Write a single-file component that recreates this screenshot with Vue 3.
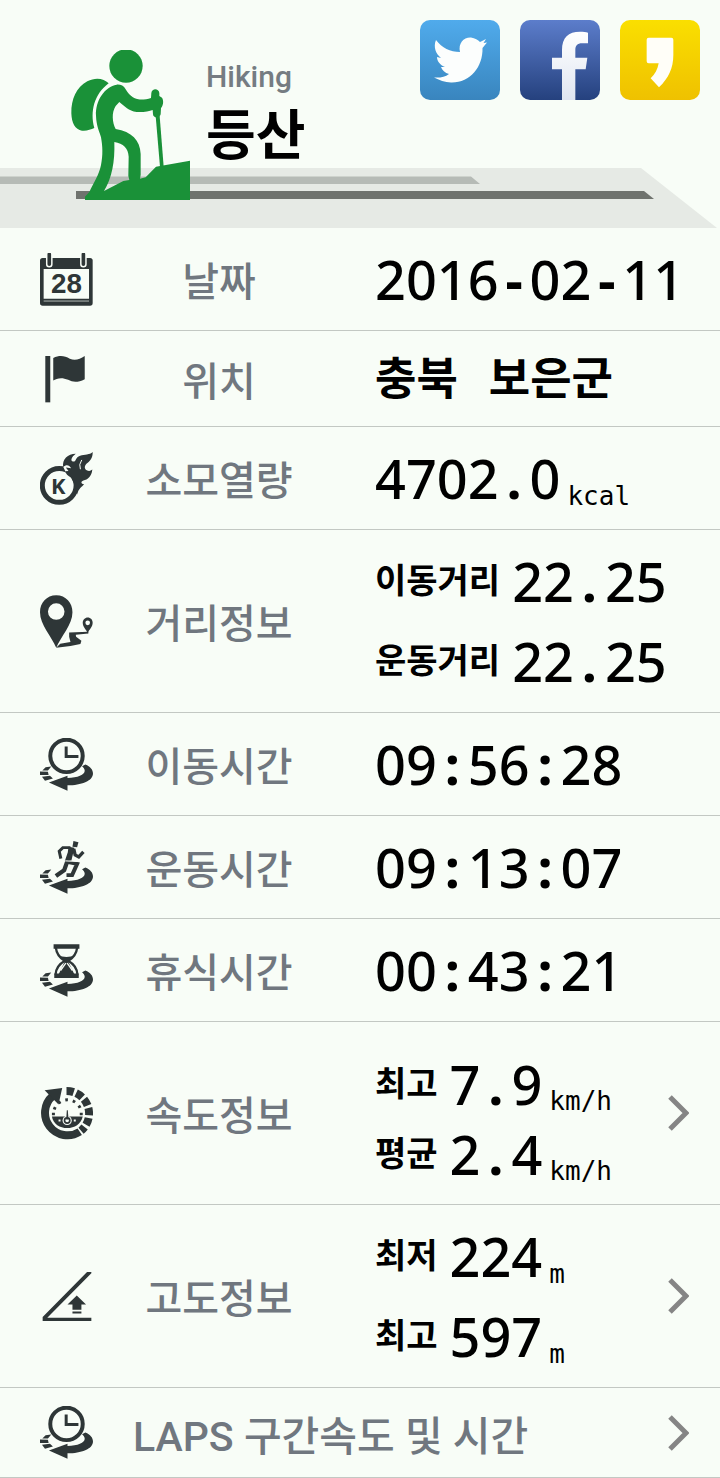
<script setup>
const rows = [
  { icon: 'calendar', label: '날짜', lines: [{ value: '2016-02-11' }] },
  { icon: 'flag', label: '위치', size: 'short', lines: [{ value: '충북 보은군', korean: true }] },
  { icon: 'burn', label: '소모열량', lines: [{ value: '4702.0', unit: 'kcal' }] },
  {
    icon: 'route',
    label: '거리정보',
    size: 'tall',
    lines: [
      { name: '이동거리', value: '22.25' },
      { name: '운동거리', value: '22.25' }
    ]
  },
  { icon: 'clock', label: '이동시간', lines: [{ value: '09:56:28' }] },
  { icon: 'runner', label: '운동시간', lines: [{ value: '09:13:07' }] },
  { icon: 'hourglass', label: '휴식시간', lines: [{ value: '00:43:21' }] },
  {
    icon: 'speed',
    label: '속도정보',
    size: 'tall',
    dense: true,
    href: '#speed',
    lines: [
      { name: '최고', value: '7.9', unit: 'km/h' },
      { name: '평균', value: '2.4', unit: 'km/h' }
    ]
  },
  {
    icon: 'altitude',
    label: '고도정보',
    size: 'tall',
    href: '#altitude',
    lines: [
      { name: '최저', value: '224', unit: 'm' },
      { name: '최고', value: '597', unit: 'm' }
    ]
  },
  { icon: 'clock', label: 'LAPS 구간속도 및 시간', size: 'laps', href: '#laps', lines: [] }
]

// Separators get a cell as wide as a digit
const splitValue = (value) => value.split(/([-.: ])/).filter((part) => part !== '')
const isSeparator = (part) => /^[-.: ]$/.test(part)
</script>

<template>
  <main class="page">
    <header class="header">
      <svg class="header__band" viewBox="0 0 720 60" preserveAspectRatio="none" aria-hidden="true">
        <path d="M0 0H641L717 60H0Z" fill="#e6eae5" />
        <path d="M0 8.500H471L480 16H0Z" fill="#b6bbb6" />
        <path d="M76 23H644L654 31H76Z" fill="#6f736e" />
      </svg>

      <svg class="header__hiker" viewBox="210 150 360 450" aria-hidden="true">
        <g fill="#1a9138">
          <circle cx="378" cy="198" r="50" />
          <path d="M326 250C312 235 286 231 262 244C229 262 213 298 214 340C215 370 225 389 246 392C260 394 272 388 283 384C270 335 282 283 326 250Z" />
          <path d="M350 254C315 260 286 300 288 347C289 380 300 398 303 412C308 440 309 465 303 495C297 525 280 550 268 576L255 590V600H570V482L468 500L437 532L420 536L422 524V462C420 420 395 395 347 387C337 368 334 338 347 318L358 306C375 320 385 332 410 336C430 337 448 334 458 330L459 343C460 356 480 355 482 343L483 324C491 315 491 300 486 293L478 288V279C476 264 456 264 454 279L453 294C440 298 425 300 415 298C397 295 387 284 377 268C371 257 361 253 350 254ZM343 426C370 430 385 445 386 470L385 528L388 540L370 543L312 573C336 535 345 485 343 426Z" fill-rule="evenodd" />
          <path d="M467 348L479 348L491 500H480Z" />
        </g>
      </svg>

      <div class="header__titles">
        <p class="header__subtitle">Hiking</p>
        <h1 class="header__title">등산</h1>
      </div>

      <div class="header__share">
        <button class="share" type="button" aria-label="Twitter">
          <svg viewBox="0 0 80 80">
            <defs>
              <linearGradient id="twitter" x2="0" y2="1">
                <stop offset="0" stop-color="#50abec" />
                <stop offset="1" stop-color="#3985be" />
              </linearGradient>
            </defs>
            <rect width="80" height="80" rx="10" fill="url(#twitter)" />
            <path
              fill="#fcfefd"
              d="M16 20C22 28 30 32 40 32C38 23 44 17 51 17.500C55 18 58 20 60 22L66 19L63.500 23L67 22.500L62.500 28C63 47 50 63 31 62.500C25 62.500 19 60 14 57.500C20 58 25 57 29 54C25 53 22 50 21 47H25C20 45 17 41 17 37L21 38C16 34 13 27 16 20Z"
            />
          </svg>
        </button>
        <button class="share" type="button" aria-label="Facebook">
          <svg viewBox="360 60 240 240">
            <defs>
              <linearGradient id="facebook" x2="0" y2="1">
                <stop offset="0" stop-color="#5c7dcb" />
                <stop offset="1" stop-color="#25417e" />
              </linearGradient>
              <linearGradient id="stem" x2="0" y2="1">
                <stop offset="0" stop-color="#ffffff" />
                <stop offset="1" stop-color="#dfe5f1" />
              </linearGradient>
            </defs>
            <rect x="360" y="60" width="240" height="240" rx="30" fill="url(#facebook)" />
            <path d="M486 300V208H456V173H486V150C486 112 505 95 540 95C550 95 558 96 564 98V130H546C532 130 526 137 526 150V173H562L557 208H526V300Z" fill="url(#stem)" />
          </svg>
        </button>
        <button class="share" type="button" aria-label="KakaoStory">
          <svg viewBox="660 60 240 240">
            <defs>
              <linearGradient id="kakao" x2="0" y2="1">
                <stop offset="0" stop-color="#fadf00" />
                <stop offset="1" stop-color="#efc100" />
              </linearGradient>
            </defs>
            <rect x="660" y="60" width="240" height="240" rx="30" fill="url(#kakao)" />
            <path d="M746 113H814Q820 113 820 119V165C820 205 805 235 777 262L752 235C765 222 773 208 776 190H746Q740 190 740 184V119Q740 113 746 113Z" fill="#fffef8" />
          </svg>
        </button>
      </div>
    </header>

    <ul class="list">
      <li v-for="row in rows" :key="row.label">
        <component
          :is="row.href ? 'a' : 'div'"
          :href="row.href"
          :class="['row', row.size && `row--${row.size}`, { 'row--dense': row.dense }]"
        >
          <svg class="row__icon" viewBox="0 0 160 160" aria-hidden="true">
            <!-- Return arrow shared by the time icons -->
            <g v-if="['clock', 'runner', 'hourglass'].includes(row.icon)">
              <path d="M27 134L83 114V121C114 120 135 111 135 99C135 93 131 89 127 85L137 80C152 86 160 96 160 108C159 130 125 143 83 143V159Z" />
              <path d="M7 98L17 88L34 86L24 98ZM0 101L24 102L26 112H0ZM6 117L30 114L39 122L15 129Z" />
            </g>

            <g v-if="row.icon === 'calendar'">
              <rect y="15" width="159" height="144" rx="8" />
              <path class="icon-paper" d="M11 48H148V138H11Z" />
              <path class="icon-cut" d="M11 145H148" stroke-width="2" />
              <path class="icon-cut" d="M28 2V34M131 2V34" stroke-width="20" stroke-linecap="round" />
              <path class="icon-line" d="M28 4V34M131 4V34" stroke-width="11" stroke-linecap="round" />
              <text x="80" y="120" font-size="84">28</text>
            </g>

            <g v-else-if="row.icon === 'flag'">
              <path d="M16 12H31V152H16Z" />
              <path d="M40 18C60 8 75 12 90 20C105 27 120 22 135 12V82C115 92 100 92 85 84C65 75 50 80 40 86Z" />
            </g>

            <g v-else-if="row.icon === 'burn'">
              <circle class="icon-line" cx="58" cy="101" r="51" stroke-width="15" />
              <path class="icon-paper" d="M66 36L80 66L84 80L104 84L118 70L90 40Z" />
              <path d="M70 46C66 22 84 5 108 5C96 14 90 26 100 29C110 30 106 16 121 11C135 7 150 9 159 0C160 18 150 28 141 35C133 43 134 52 141 55C147 58 152 58 158 53C156 74 144 84 131 86C122 89 124 97 133 97C126 106 117 108 112 128C106 104 100 86 92 76C84 72 78 66 76 58L86 57L78 47L94 49C88 39 79 37 70 46Z" />
              <path class="icon-cut" d="M126 24Q116 38 122 52" stroke-width="3" />
              <text class="icon-letter" x="55" y="126" font-size="66">K</text>
            </g>

            <g v-else-if="row.icon === 'route'">
              <path fill-rule="evenodd" d="M49 1C20 1 0 24 0 52C0 90 35 125 49 159C63 125 98 90 98 52C98 24 78 1 49 1ZM49 25A25 25 0 1 1 49 75A25 25 0 1 1 49 25Z" />
              <path fill-rule="evenodd" d="M144 68C136 68 129 75 129 84C129 97 140 104 144 116C148 104 159 97 159 84C159 75 153 68 144 68ZM144 77A7 7 0 1 1 144 91A7 7 0 1 1 144 77Z" />
              <path d="M49 159L61 147L92 142L88 126V113L146 111V116L108 120L109 126L125 138L122 148L92 154Z" />
            </g>

            <g v-else-if="row.icon === 'clock'">
              <circle class="icon-line" cx="80" cy="54" r="49" stroke-width="12" />
              <path class="icon-line" d="M79 26V56H116" stroke-width="9" />
            </g>

            <g v-else-if="row.icon === 'runner'">
              <path d="M101 0L116 4L112 19L98 17Z" />
              <path class="icon-line" d="M92 20H69L58 31L63 53" stroke-width="9" />
              <path d="M86 17L104 20L95 58L75 60L84 34Z" />
              <path class="icon-line" d="M102 24L106 42L117 48L131 33" stroke-width="10" />
              <path class="icon-line" d="M83 60L73 88L48 106" stroke-width="13" />
              <path class="icon-line" d="M82 63L112 69L97 103H80" stroke-width="12" />
              <path class="icon-cut" d="M76 60L112 62" stroke-width="3" />
            </g>

            <g v-else-if="row.icon === 'hourglass'">
              <path d="M41 1H119V14H41ZM43 89H117V103H43Z" />
              <path class="icon-line" d="M48 12C50 32 60 42 74 51C58 60 48 72 47 92M112 12C110 32 100 42 86 51C102 60 112 72 113 92" stroke-width="7" />
              <path d="M54 34Q80 44 106 34L85 52L104 92H56L75 52Z" />
              <path class="icon-cut" d="M78 58L62 80M82 58L98 80" stroke-width="4" />
            </g>

            <g v-else-if="row.icon === 'speed'">
              <path class="icon-line" d="M38 27A68 68 0 0 0 120 135" stroke-width="24" />
              <path d="M14 10L67 3L56 53Z" />
              <path class="icon-line" d="M80 12A68 68 0 0 1 124 132" stroke-width="24" stroke-dasharray="22 8" />
              <path class="icon-line" d="M43 68A42 42 0 0 1 123 68" stroke-width="9" stroke-dasharray="8 15" />
              <path d="M36 89H129C124 112 104 124 82 124C60 124 40 112 36 89Z" />
              <path d="M36 78H45V85H36ZM120 78H129V85H120Z" />
              <path class="icon-cut" d="M56 101H62M102 101H108" stroke-width="6" />
              <circle class="icon-paper" cx="82" cy="101" r="14" />
              <circle class="icon-line" cx="82" cy="101" r="8" stroke-width="5" />
              <path d="M79 98L81 70H84L86 98Z" />
            </g>

            <g v-else>
              <path d="M8 154V142L142 6H155V10L22 144H155V154Z" />
              <path d="M111 77L139 104H125V120H98V104H83ZM98 125H125V131H98Z" />
            </g>
          </svg>

          <span class="row__label">{{ row.label }}</span>

          <span v-if="row.lines.length" class="row__values">
            <span v-for="line in row.lines" :key="line.name" class="measure">
              <span v-if="line.name" class="measure__name">{{ line.name }}</span>
              <span :class="['measure__value', { 'measure__value--korean': line.korean }]"><template
                v-for="(part, index) in splitValue(line.value)"
                :key="index"
              ><span v-if="isSeparator(part)" class="measure__separator">{{ part }}</span><template v-else>{{ part }}</template></template></span>
              <span v-if="line.unit" class="measure__unit">{{ line.unit }}</span>
            </span>
          </span>

          <svg v-if="row.href" class="row__chevron" viewBox="0 0 22 38" aria-hidden="true">
            <path d="M3 3L19 19L3 35" fill="none" stroke="#858585" stroke-width="5" />
          </svg>
        </component>
      </li>
    </ul>
  </main>
</template>

<style>
body {
  margin: 0;
  background: #f8fdf7;
}
</style>

<style scoped>
.page {
  background: #f8fdf7;
  color: #000;
  font-family: Roboto, 'Noto Sans CJK KR', sans-serif;
}

/* Header */
.header {
  position: relative;
  display: flex;
  align-items: flex-start;
  padding: 20px 20px 28px 70px;
}

.header__band {
  position: absolute;
  left: 0;
  bottom: 0;
  width: 100%;
  height: 60px;
}

.header__hiker {
  position: relative;
  flex: none;
  width: 120px;
  height: 150px;
  margin-top: 30px;
}

.header__titles {
  position: relative;
  padding: 38px 0 0 16px;
}

.header__subtitle {
  margin: 0;
  color: #757c82;
  font-size: 30px;
  font-weight: 500;
  line-height: 38px;
}

.header__title {
  margin: 0;
  font-size: 54px;
  font-weight: 700;
  line-height: 82px;
}

.header__share {
  display: flex;
  gap: 20px;
  margin-left: auto;
}

.share {
  width: 80px;
  height: 80px;
  padding: 0;
  border: none;
  background: none;
  cursor: pointer;
}

.share svg {
  display: block;
}

/* Rows */
.list {
  margin: 0;
  padding: 0;
  list-style: none;
}

.row {
  display: flex;
  align-items: center;
  box-sizing: border-box;
  min-height: 103px;
  padding: 0 31px 0 40px;
  border-bottom: 1px solid #c3c8c3;
  color: inherit;
  text-decoration: none;
}

.row--short {
  min-height: 96px;
}

.row--tall {
  min-height: 183px;
}

.row--laps {
  min-height: 90px;
}

.row__icon {
  flex: none;
  width: 53px;
  height: 53px;
  fill: #2e3637;
}

.icon-line {
  fill: none;
  stroke: #2e3637;
}

.icon-paper {
  fill: #f8fdf7;
}

.icon-cut {
  fill: none;
  stroke: #f8fdf7;
}

.row__icon text {
  font-family: 'Liberation Sans', sans-serif;
  font-weight: 700;
  text-anchor: middle;
}

.row__icon .icon-letter {
  font-family: 'Noto Sans', sans-serif;
}

.row__label {
  flex: none;
  width: 252px;
  padding-top: 8px;
  color: #70777f;
  font-size: 40px;
  font-weight: 500;
  line-height: 60px;
  text-align: center;
}

.row--laps .row__label {
  flex: 1;
  padding-left: 40px;
  font-size: 41px;
  text-align: left;
}

.row__values {
  flex: 1;
  display: flex;
  flex-direction: column;
  padding-left: 30px;
}

.row--dense .row__values {
  padding-top: 12px;
}

.row__chevron {
  flex: none;
  width: 22px;
  height: 38px;
}

/* Measures */
.measure {
  display: flex;
  align-items: center;
  height: 80px;
  white-space: nowrap;
}

.row--dense .measure {
  height: 70px;
}

.measure__name {
  margin-right: 12px;
  font-size: 34px;
  font-weight: 700;
  line-height: 50px;
}

.measure__value {
  font-family: 'Noto Sans', 'Noto Sans CJK KR', sans-serif;
  font-size: 54px;
  font-weight: 500;
  line-height: 70px;
}

.measure__value--korean {
  padding-bottom: 5px;
  font-family: 'Noto Sans CJK KR', sans-serif;
  font-size: 45px;
  font-weight: 700;
}

.measure__separator {
  display: inline-block;
  width: 31px;
  font-weight: 700;
  text-align: center;
  white-space: pre;
}

.measure__unit {
  align-self: flex-end;
  margin-left: 7px;
  font-family: 'DejaVu Sans Mono', monospace;
  font-size: 26px;
  line-height: 44px;
}

.row--dense .measure__unit {
  line-height: 36px;
}
</style>
